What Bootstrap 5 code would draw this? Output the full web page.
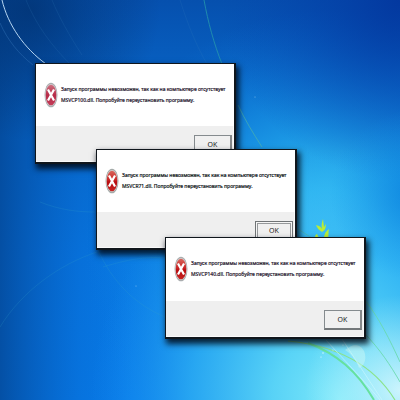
<!DOCTYPE html>
<html lang="ru">
<head>
<meta charset="utf-8">
<meta name="viewport" content="width=device-width, initial-scale=1">
<title>Системная ошибка</title>
<link href="https://cdn.jsdelivr.net/npm/bootstrap@5.3.0/dist/css/bootstrap.min.css" rel="stylesheet">
<style>
body { font-family: "Noto Sans", "Liberation Sans", sans-serif; background: #0a66cf; }
.wallpaper { z-index: 0; }
.dialog-window {
  position: absolute; width: 201px; z-index: 1;
  background: #fff; color: #2a2030;
  border: 1px solid #10161c; border-right-width: 2px; border-bottom-width: 2px;
  box-shadow: 2px 4px 6px 1px rgba(0, 8, 20, .85);
}
.window-one { left: 35px; top: 63px; }
.window-two { left: 96px; top: 149px; color: #14201c; }
.window-three { left: 165px; top: 237px; }
.dialog-message { padding: 18px 0 18px 8px; gap: 3px; min-height: 62px; }
.window-three .dialog-message { min-height: 63px; }
.dialog-message svg { width: 14px; height: 26px; flex: none; }
.dialog-message p { font-size: 5px; line-height: 11px; padding-top: 2px; white-space: nowrap; -webkit-text-stroke: .2px currentColor; }
.dialog-actions { background: #efefef; padding: 9px 1px 6px; border-right: 1px solid #fafafa; border-bottom: 1px solid #fafafa; }
.ok-button {
  width: 38px; height: 20px; padding: 0; font-size: 7px; line-height: 17px; color: #222;
  background: #f0f0f0; border: 1px solid #858b8e; border-bottom: 2px solid #74787a; border-right: 2px solid #85888a; border-radius: 0;
}
.window-two .ok-button { border: 1px solid #707476; box-shadow: inset 0 0 0 1px #f5f5f5, inset 0 0 0 2px #96999b; line-height: 18px; }
</style>
<script src="https://cdn.jsdelivr.net/npm/bootstrap@5.3.0/dist/js/bootstrap.bundle.min.js"></script>
</head>
<body>
<main class="position-relative vh-100 overflow-hidden">
  <svg class="wallpaper position-absolute top-0 start-0 w-100 h-100" viewBox="0 0 400 400" preserveAspectRatio="none" aria-hidden="true">
    <defs>
      <linearGradient id="base" x1="0" y1="0" x2="0" y2="1">
        <stop offset="0" stop-color="#0650ae"/><stop offset=".3" stop-color="#086bce"/><stop offset=".65" stop-color="#0878e4"/><stop offset="1" stop-color="#087cea"/>
      </linearGradient>
      <linearGradient id="edge"><stop offset="0" stop-color="#034594" stop-opacity=".8"/><stop offset=".2" stop-color="#0458ba" stop-opacity=".25"/><stop offset=".33" stop-color="#0458ba" stop-opacity="0"/></linearGradient>
      <radialGradient id="dark" gradientUnits="userSpaceOnUse" cx="30" cy="10" r="130"><stop offset="0" stop-color="#02306d" stop-opacity=".75"/><stop offset="1" stop-color="#02306d" stop-opacity="0"/></radialGradient>
      <radialGradient id="corner" gradientUnits="userSpaceOnUse" cx="400" cy="0" r="180"><stop offset="0" stop-color="#03389f"/><stop offset="1" stop-color="#0545b0" stop-opacity="0"/></radialGradient>
      <radialGradient id="glow" gradientUnits="userSpaceOnUse" cx="325" cy="250" r="240"><stop offset="0" stop-color="#5de0f6"/><stop offset=".25" stop-color="#3ac6f2" stop-opacity=".95"/><stop offset=".5" stop-color="#20a3ea" stop-opacity=".75"/><stop offset="1" stop-color="#0c78dc" stop-opacity="0"/></radialGradient>
      <radialGradient id="low" gradientUnits="userSpaceOnUse" cx="340" cy="400" r="250"><stop offset="0" stop-color="#80eafa"/><stop offset=".27" stop-color="#60daf8" stop-opacity=".9"/><stop offset=".6" stop-color="#30b2f5" stop-opacity=".75"/><stop offset="1" stop-color="#168cf2" stop-opacity="0"/></radialGradient>
      <radialGradient id="white" gradientUnits="userSpaceOnUse" cx="400" cy="390" r="95"><stop offset="0" stop-color="#e0fafe" stop-opacity=".85"/><stop offset="1" stop-color="#b5f2fc" stop-opacity="0"/></radialGradient>
      <radialGradient id="right" gradientUnits="userSpaceOnUse" cx="415" cy="195" r="85"><stop offset="0" stop-color="#087fdc" stop-opacity=".75"/><stop offset="1" stop-color="#1692e4" stop-opacity="0"/></radialGradient>
    </defs>
    <path fill="url(#base)" d="M0 0h400v400H0z"/>
    <path fill="url(#edge)" d="M0 0h400v400H0z"/>
    <path fill="url(#dark)" d="M0 0h400v400H0z"/>
    <path fill="url(#glow)" d="M0 0h400v400H0z"/>
    <path fill="url(#corner)" d="M0 0h400v400H0z"/>
    <path fill="url(#low)" d="M0 0h400v400H0z"/>
    <path fill="url(#right)" d="M0 0h400v400H0z"/>
    <path fill="url(#white)" d="M0 0h400v400H0z"/>
    <g fill="none" stroke-width="1">
      <path d="M2 0C8 25 24 48 46 64" stroke="#b5d5f2"/>
      <path d="M0 23c8 18 19 31 33 42" stroke="#3474b9" opacity=".45"/>
      <path d="M26 0c10 25 26 46 44 64M52 0c7 17 17 35 30 55M180 0c8 25 16 45 27 64" stroke="#397fbd" opacity=".18"/>
      <path d="M204 0c4 22 10 44 18 64" stroke="#2699ad" opacity=".8"/>
      <path d="M238 105c7 15 15 28 24 42M298 229l14 9" stroke="#55b9a4" opacity=".6"/>
      <path d="M0 327c22-36 60-63 97-75M103 267c32-10 48-10 62-9M98 250c14 31 36 54 67 67M40 202c20 8 38 10 55 10" stroke="#35a6c9" opacity=".2"/>
      <path d="M365 300c14 18 25 40 35 62M365 334c14 14 26 32 35 48" stroke="#69d9ac" opacity=".85"/>
      <path d="M288 341c42 4 83 20 107 59" stroke="#8be389" stroke-width="1.2"/>
      <path d="M308 343c29 11 49 28 66 57" stroke="#66e19f" stroke-width="2"/>
      <path d="M326 340c18 20 35 37 54 60M340 336l42 64" stroke="#d8fbff" opacity=".5"/>
    </g>
    <path d="M356 345c12 2 12 20 3 23-3-9-9-15-14-18 4-3 7-5 11-5z" fill="#c9f8f5" opacity=".5"/>
    <path d="M322 232c-3-2-5-4-6-7 4 1 5 2 6 4-1-4 0-7 1-10l1 8 2-3c0 5-2 7-4 8zm-7 6c0-2 0-3 2-4l2 4zm9 0c0-4 2-7 5-9-1 4 0 6-1 9z" fill="#b9ed35"/>
    <g fill="#e5fcff"><circle cx="323" cy="353" r=".7"/><circle cx="321" cy="357" r=".6"/><circle cx="333" cy="350" r=".5"/><circle cx="343" cy="345" r=".5"/><circle cx="255" cy="97" r=".4"/><circle cx="136" cy="286" r=".4"/></g>
    <defs>
      <linearGradient id="red" x1="0" y1="0" x2="0" y2="1"><stop offset="0" stop-color="#d8665c"/><stop offset=".45" stop-color="#c92525"/><stop offset=".55" stop-color="#b80c10"/><stop offset="1" stop-color="#c62322"/></linearGradient>
      <linearGradient id="rose" x1="0" y1="0" x2="0" y2="1"><stop offset="0" stop-color="#ce7180"/><stop offset=".5" stop-color="#b62c49"/><stop offset="1" stop-color="#c23b57"/></linearGradient>
    </defs>
  </svg>

  <section class="dialog-window window-one" role="alertdialog" aria-labelledby="message-one">
    <div class="dialog-message d-flex align-items-start">
      <svg viewBox="0 0 14 26" aria-hidden="true"><ellipse cx="7" cy="13" rx="6.5" ry="12.3" fill="#a9adaf"/><ellipse cx="7" cy="13" rx="5.8" ry="11" fill="#d8cbd0"/><ellipse cx="7" cy="13" rx="5.3" ry="10.3" fill="url(#rose)"/><path d="M4 7.5l6 11M10 7.5l-6 11" stroke="#fff" stroke-width="2.2"/></svg>
      <p class="mb-0" id="message-one">Запуск программы невозможен, так как на компьютере отсутствует<br>MSVCP100.dll. Попробуйте переустановить программу.</p>
    </div>
    <div class="dialog-actions d-flex justify-content-end"><button type="button" class="btn ok-button">OK</button></div>
  </section>

  <section class="dialog-window window-two" role="alertdialog" aria-labelledby="message-two">
    <div class="dialog-message d-flex align-items-start">
      <svg viewBox="0 0 14 26" aria-hidden="true"><ellipse cx="7" cy="13" rx="6.5" ry="12.3" fill="#a3aaa8"/><ellipse cx="7" cy="13" rx="5.8" ry="11" fill="#d8d0ce"/><ellipse cx="7" cy="13" rx="5.3" ry="10.3" fill="url(#red)"/><path d="M4 7.5l6 11M10 7.5l-6 11" stroke="#fff" stroke-width="2.2"/></svg>
      <p class="mb-0" id="message-two">Запуск программы невозможен, так как на компьютере отсутствует<br>MSVCR71.dll. Попробуйте переустановить программу.</p>
    </div>
    <div class="dialog-actions d-flex justify-content-end"><button type="button" class="btn ok-button">OK</button></div>
  </section>

  <section class="dialog-window window-three" role="alertdialog" aria-labelledby="message-three">
    <div class="dialog-message d-flex align-items-start">
      <svg viewBox="0 0 14 26" aria-hidden="true"><ellipse cx="7" cy="13" rx="6.5" ry="12.3" fill="#a9adaf"/><ellipse cx="7" cy="13" rx="5.8" ry="11" fill="#d8d0ce"/><ellipse cx="7" cy="13" rx="5.3" ry="10.3" fill="url(#red)"/><path d="M4 7.5l6 11M10 7.5l-6 11" stroke="#fff" stroke-width="2.2"/></svg>
      <p class="mb-0" id="message-three">Запуск программы невозможен, так как на компьютере отсутствует<br>MSVCP140.dll. Попробуйте переустановить программу.</p>
    </div>
    <div class="dialog-actions d-flex justify-content-end"><button type="button" class="btn ok-button">OK</button></div>
  </section>
</main>
</body>
</html>
